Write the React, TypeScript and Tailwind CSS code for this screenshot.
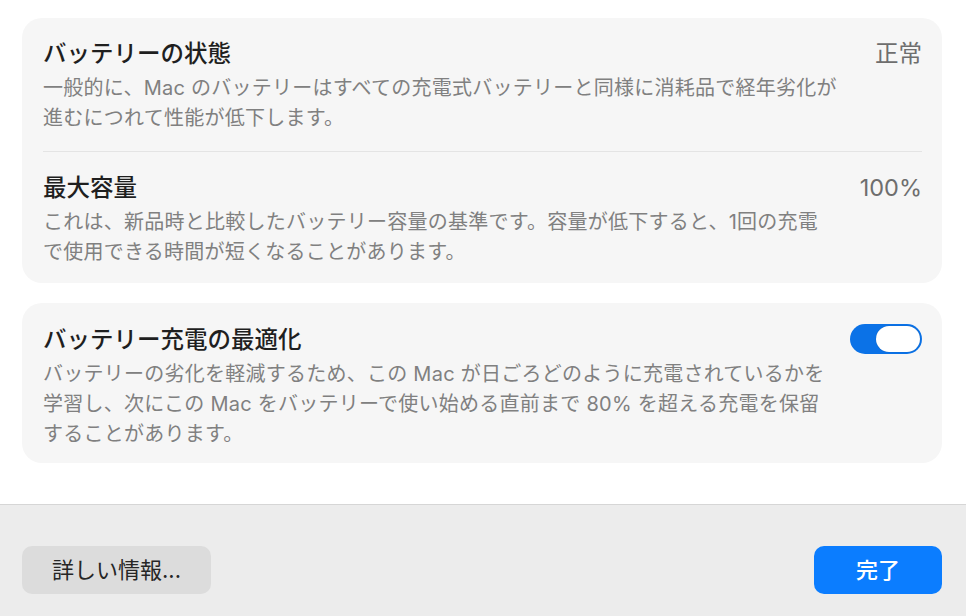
import { useState } from 'react'

const font = { fontFamily: '"Inter", "Noto Sans CJK JP", sans-serif' }

interface RowProps {
  title: string
  lines: string[]
  value?: string
  className?: string
}

function Row({ title, lines, value, className = '' }: RowProps) {
  return (
    <div className={`flex justify-between ${className}`}>
      <div>
        <div className="text-[23.5px] leading-[32px] font-medium text-[#1f1f1f]">{title}</div>
        <div className="mt-[3px] text-[20px] leading-[30px] tracking-[0.25px] text-[#808080]">
          {lines.map((l) => (
            <div key={l} className="whitespace-nowrap">
              {l}
            </div>
          ))}
        </div>
      </div>
      {value && <div className="text-[23.5px] leading-[32px] text-[#6e6e6e]">{value}</div>}
    </div>
  )
}

export default function App() {
  const [optimized, setOptimized] = useState(true)

  return (
    <div className="w-[966px] h-[616px] bg-white flex flex-col overflow-hidden" style={font}>
      <div className="flex-1 px-[22px] pt-[18px] pr-[24px] flex flex-col gap-[20px]">
        {/* Battery health */}
        <div className="bg-[#f6f6f6] rounded-[20px] px-[21px] pr-[20px]">
          <Row
            className="pt-[20px] pb-[18px]"
            title="バッテリーの状態"
            value="正常"
            lines={[
              '一般的に、Mac のバッテリーはすべての充電式バッテリーと同様に消耗品で経年劣化が',
              '進むにつれて性能が低下します。',
            ]}
          />
          <div className="h-px bg-[#e4e4e4]" />
          <Row
            className="pt-[20px] pb-[16px]"
            title="最大容量"
            value="100%"
            lines={[
              'これは、新品時と比較したバッテリー容量の基準です。容量が低下すると、1回の充電',
              'で使用できる時間が短くなることがあります。',
            ]}
          />
        </div>

        {/* Optimized charging */}
        <div className="bg-[#f6f6f6] rounded-[20px] px-[21px] pr-[20px] pt-[21px] pb-[14px] flex justify-between">
          <div>
            <div className="text-[23.5px] leading-[32px] font-medium text-[#1f1f1f]">バッテリー充電の最適化</div>
            <div className="mt-[3px] text-[20px] leading-[30px] tracking-[0.25px] text-[#808080]">
              <div className="whitespace-nowrap">バッテリーの劣化を軽減するため、この Mac が日ごろどのように充電されているかを</div>
              <div className="whitespace-nowrap">学習し、次にこの Mac をバッテリーで使い始める直前まで 80% を超える充電を保留</div>
              <div className="whitespace-nowrap">することがあります。</div>
            </div>
          </div>
          <button
            onClick={() => setOptimized(!optimized)}
            className={`w-[72px] h-[30px] rounded-full p-[2px] flex items-center ${
              optimized ? 'bg-[#0b72e7] justify-end' : 'bg-[#d9d9d9] justify-start'
            }`}
          >
            <span className="block w-[44px] h-[26px] rounded-full bg-white shadow-[0_0_1px_rgba(0,0,0,0.3)]" />
          </button>
        </div>
      </div>

      {/* Footer */}
      <div className="h-[112px] border-t border-[#d6d6d6] bg-[#ececec] flex items-start justify-between pt-[41px] pl-[22px] pr-[24px]">
        <button className="w-[189px] h-[48px] rounded-[10px] bg-[#dcdcdc] text-[22px] text-[#262626]">
          詳しい情報...
        </button>
        <button className="w-[128px] h-[48px] rounded-[10px] bg-[#0b7dff] text-[22px] font-medium text-white">
          完了
        </button>
      </div>
    </div>
  )
}
